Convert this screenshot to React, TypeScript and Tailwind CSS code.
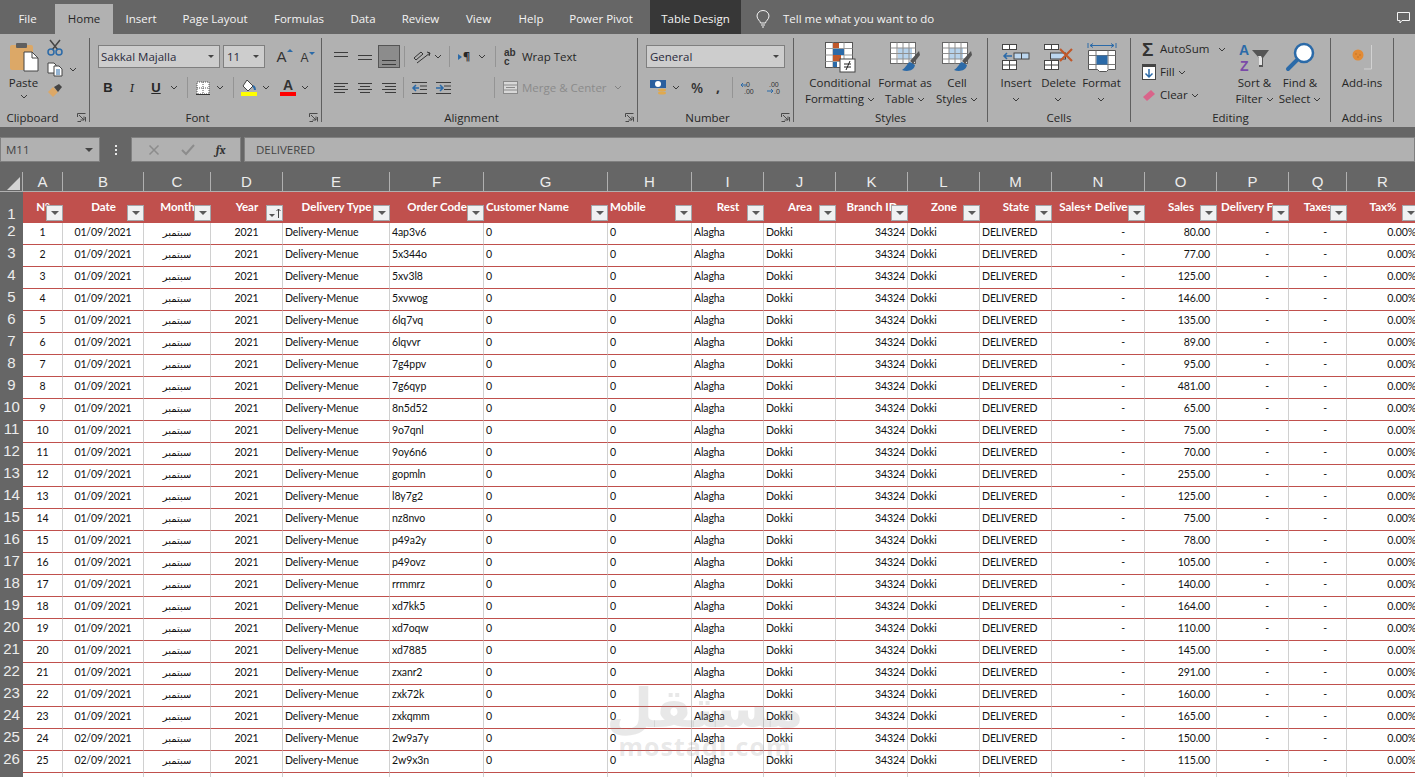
import { ReactNode } from "react"

const ui = { fontFamily: '"Open Sans", "Noto Sans", sans-serif' }
const cellFont = { fontFamily: 'Lato, "DejaVu Sans", sans-serif' }

const gridCols =
  "grid grid-cols-[23px_40px_81px_67px_72px_107px_94px_124px_84px_72px_72px_72px_72px_72px_93px_72px_72px_58px_72px]"

const tabs = [
  { name: "File", w: "w-[55px]" },
  { name: "Home", w: "w-[58px]", active: true },
  { name: "Insert", w: "w-[56px]" },
  { name: "Page Layout", w: "w-[92px]" },
  { name: "Formulas", w: "w-[76px]" },
  { name: "Data", w: "w-[52px]" },
  { name: "Review", w: "w-[63px]" },
  { name: "View", w: "w-[53px]" },
  { name: "Help", w: "w-[52px]" },
  { name: "Power Pivot", w: "w-[93px] pr-[5px]" },
]

const letters = "ABCDEFGHIJKLMNOPQR".split("")

const headers = [
  { t: "N°" },
  { t: "Date" },
  { t: "Month" },
  { t: "Year", sorted: true },
  { t: "Delivery Type" },
  { t: "Order Code" },
  { t: "Customer Name", left: true },
  { t: "Mobile", left: true },
  { t: "Rest" },
  { t: "Area" },
  { t: "Branch ID" },
  { t: "Zone" },
  { t: "State" },
  { t: "Sales+ Delivery" },
  { t: "Sales" },
  { t: "Delivery Fee" },
  { t: "Taxes" },
  { t: "Tax%" },
]

const orders: [string, string][] = [
  ["4ap3v6", "80.00"],
  ["5x344o", "77.00"],
  ["5xv3l8", "125.00"],
  ["5xvwog", "146.00"],
  ["6lq7vq", "135.00"],
  ["6lqvvr", "89.00"],
  ["7g4ppv", "95.00"],
  ["7g6qyp", "481.00"],
  ["8n5d52", "65.00"],
  ["9o7qnl", "75.00"],
  ["9oy6n6", "70.00"],
  ["gopmln", "255.00"],
  ["l8y7g2", "125.00"],
  ["nz8nvo", "75.00"],
  ["p49a2y", "78.00"],
  ["p49ovz", "105.00"],
  ["rrmmrz", "140.00"],
  ["xd7kk5", "164.00"],
  ["xd7oqw", "110.00"],
  ["xd7885", "145.00"],
  ["zxanr2", "291.00"],
  ["zxk72k", "160.00"],
  ["zxkqmm", "165.00"],
  ["2w9a7y", "150.00"],
  ["2w9x3n", "115.00"],
]

function Chev({ className = "" }: { className?: string }) {
  return (
    <svg width="8" height="5" viewBox="0 0 8 5" className={`shrink-0 ${className}`}>
      <path d="M1 1l3 3 3-3" fill="none" stroke="#3a3a3a" strokeWidth="1" />
    </svg>
  )
}

function Sep({ className = "" }: { className?: string }) {
  return <div className={`w-px h-[21px] bg-[#949494] shrink-0 ${className}`} />
}

function Lines({ rows }: { rows: [number, number, number][] }) {
  return (
    <svg width="16" height="14" viewBox="0 0 16 14" className="shrink-0">
      {rows.map(([y, a, b]) => (
        <path key={y} d={`M${a} ${y}.5H${b}`} stroke="#3c3c3c" />
      ))}
    </svg>
  )
}

function Launcher() {
  return (
    <svg width="9" height="9" viewBox="0 0 9 9" className="absolute right-[3px] bottom-0">
      <path d="M.5 4V.5H8.500M8.500.5" fill="none" stroke="#4a4a4a" />
      <path d="M2 2l5 5M7 3.500V7H3.500" fill="none" stroke="#4a4a4a" />
      <path d="M.5 8.500H4M8.500 4v4.500" fill="none" stroke="#4a4a4a" />
    </svg>
  )
}

function Group({
  label,
  w,
  launcher,
  labelPad = "",
  children,
}: {
  label: string
  w: string
  launcher?: boolean
  labelPad?: string
  children: ReactNode
}) {
  return (
    <div className={`relative ${w} h-[84px] border-r border-[#5f5f5f] flex flex-col shrink-0`}>
      <div className="flex-1 min-h-0">{children}</div>
      <div className={`h-[12px] text-center text-[11.5px] leading-[16px] text-[#262626] ${labelPad}`}>{label}</div>
      {launcher && <Launcher />}
    </div>
  )
}

function BigButton({
  w,
  icon,
  lines,
  chevBelow,
}: {
  w: string
  icon: ReactNode
  lines: string[]
  chevBelow?: boolean
}) {
  return (
    <div className={`${w} flex flex-col items-center shrink-0 pt-[3px]`}>
      <div className="h-[32px] flex items-center justify-center">{icon}</div>
      <div className="mt-[2px] text-[11.5px] leading-[16px] text-[#262626] text-center whitespace-nowrap">
        {lines.map((l, i) => (
          <div key={l} className="flex items-center justify-center gap-[3px]">
            {l}
            {i === lines.length - 1 && !chevBelow && lines.length > 1 && <Chev />}
          </div>
        ))}
        {chevBelow && (
          <div className="h-[16px] flex items-center justify-center">
            <Chev />
          </div>
        )}
      </div>
    </div>
  )
}

function PasteIcon() {
  return (
    <svg width="30" height="30" viewBox="0 0 30 30">
      <rect x="1" y="3" width="23" height="25" rx="2" fill="#dca867" />
      <rect x="7" y="1" width="11" height="5" rx="1" fill="#5f5f5f" />
      <path d="M15 10h8l6 6v13H15z" fill="#fff" stroke="#444" />
      <path d="M23 10v6h6" fill="none" stroke="#444" />
    </svg>
  )
}

function CondIcon() {
  return (
    <svg width="31" height="31" viewBox="0 0 31 31">
      <rect x=".5" y=".5" width="27" height="25" fill="#fff" stroke="#555" />
      <path d="M.5 6.500h27M.5 13h27M.5 19.500h27M8 .5v25M19 .5v25" stroke="#9a9a9a" />
      <rect x="8" y="1" width="6" height="5" fill="#c0582a" />
      <rect x="8" y="7" width="11" height="6" fill="#2b6aa8" />
      <rect x="8" y="13" width="8" height="6" fill="#c0582a" />
      <rect x="8" y="20" width="4" height="5" fill="#2b6aa8" />
      <rect x="15" y="17" width="15" height="13" fill="#fff" stroke="#444" />
      <path d="M19 22h7M19 25h7M25 19l-4 9" stroke="#222" fill="none" />
    </svg>
  )
}

function FormatTableIcon({ tint = false }: { tint?: boolean }) {
  return (
    <svg width="31" height="31" viewBox="0 0 31 31">
      <rect x=".5" y=".5" width="25" height="21" fill="#fff" stroke="#666" />
      <rect x={tint ? 7 : 8} y="6" width="14" height="11" fill="#b7d3ec" />
      <path d="M.5 6h25M.5 11.500h25M.5 17h25M7 .5v21M13 .5v21M19 .5v21" stroke="#8f8f8f" />
      <path d="M29 9l-9 10 3 3 7-9z" fill="#555" />
      <path d="M20 20c-3 1-4 6-8 8 5 2 12 1 13-5z" fill="#2b6aa8" />
    </svg>
  )
}

function InsertIcon() {
  return (
    <svg width="28" height="26" viewBox="0 0 28 26">
      <rect x=".5" y=".5" width="14" height="5" fill="#fff" stroke="#444" />
      <path d="M7.500.5v5" stroke="#444" />
      <rect x="12" y="9" width="15" height="6" fill="#bcd6ee" stroke="#444" />
      <path d="M19.500 9v6" stroke="#444" />
      <path d="M10 12H2m3-3l-3 3 3 3" fill="none" stroke="#2b6aa8" strokeWidth="1.500" />
      <rect x=".5" y="16.500" width="14" height="9" fill="#fff" stroke="#444" />
      <path d="M7.500 16.500v9M.5 21h14" stroke="#444" />
    </svg>
  )
}

function DeleteIcon() {
  return (
    <svg width="30" height="26" viewBox="0 0 30 26">
      <rect x=".5" y=".5" width="14" height="5" fill="#fff" stroke="#444" />
      <path d="M7.500.5v5" stroke="#444" />
      <rect x="6.500" y="9" width="15" height="6" fill="#bcd6ee" stroke="#444" />
      <rect x=".5" y="16.500" width="14" height="9" fill="#fff" stroke="#444" />
      <path d="M7.500 16.500v9M.5 21h14" stroke="#444" />
      <path d="M16 5l12 12M28 5L16 17" stroke="#c0582a" strokeWidth="2.200" />
    </svg>
  )
}

function FormatIcon() {
  return (
    <svg width="30" height="31" viewBox="0 0 30 31">
      <path d="M1 1v5M29 1v5M3 3.500h24" stroke="#2b6aa8" fill="none" />
      <path d="M6 1.500L3 3.500l3 2M24 1.500l3 2-3 2" stroke="#2b6aa8" fill="none" />
      <path d="M1.500 8.500h27v19l-7 0-2 2h-7l-2-2h-9z" fill="#fff" stroke="#555" />
      <path d="M1.500 13.500h27M1.500 22.500h27M9 8.500v19M21 8.500v19" stroke="#777" />
      <rect x="9.500" y="13.500" width="11" height="9" fill="#2b6aa8" />
    </svg>
  )
}

function SortIcon() {
  return (
    <svg width="31" height="31" viewBox="0 0 31 31">
      <text x="0" y="13" fontSize="14" fontWeight="700" fill="#2b6aa8" fontFamily="Liberation Sans, sans-serif">
        A
      </text>
      <text x="1" y="29" fontSize="14" fontWeight="700" fill="#7a4aa8" fontFamily="Liberation Sans, sans-serif">
        Z
      </text>
      <path d="M13 8h17l-6 8v9h-4v-9z" fill="#555" />
      <path d="M19 14h3l1 2v7h-3v-7z" fill="#e4e4e4" />
    </svg>
  )
}

function FindIcon() {
  return (
    <svg width="30" height="30" viewBox="0 0 30 30">
      <circle cx="19" cy="11" r="9" fill="#fff" stroke="#2b6aa8" strokeWidth="2.500" />
      <path d="M12 18L3 27" stroke="#2b6aa8" strokeWidth="4" strokeLinecap="round" />
    </svg>
  )
}

function AddinIcon() {
  return (
    <svg width="30" height="30" viewBox="0 0 30 30">
      <circle cx="11" cy="13" r="5.500" fill="#e28b36" />
      <circle cx="9" cy="12" r=".7" fill="#b9691f" />
      <circle cx="13" cy="13" r=".7" fill="#b9691f" />
      <circle cx="11" cy="15" r=".7" fill="#b9691f" />
      <path d="M24.500 3v24H17" fill="none" stroke="#d2d2d2" />
    </svg>
  )
}

function Ribbon() {
  return (
    <div className="h-[93px] bg-[#b1b1b1] flex items-start pt-[4px] text-[#262626]">
      <Group label="Clipboard" w="w-[90px]" launcher labelPad="pr-[24px]">
        <div className="flex">
          <div className="w-[47px] flex flex-col items-center pt-[3px]">
            <div className="h-[32px] flex items-center">
              <PasteIcon />
            </div>
            <div className="mt-[2px] text-[11.5px] leading-[16px]">Paste</div>
            <Chev className="mt-[3px]" />
          </div>
          <div className="flex flex-col items-start pt-[1px] gap-[6px]">
            <svg width="16" height="17" viewBox="0 0 16 17">
              <path d="M3 1l8 10M13 1L5 11" stroke="#444" strokeWidth="1.500" />
              <circle cx="4" cy="13" r="3" fill="none" stroke="#2b6aa8" strokeWidth="1.500" />
              <circle cx="12" cy="13" r="3" fill="none" stroke="#2b6aa8" strokeWidth="1.500" />
            </svg>
            <div className="flex items-center gap-[6px]">
              <svg width="16" height="15" viewBox="0 0 16 15">
                <path d="M1 1h6l2 2v8H1z" fill="#fff" stroke="#444" />
                <path d="M7 4h5l3 3v7H7z" fill="#fff" stroke="#444" />
                <path d="M9 8h4M9 10h4M9 12h4" stroke="#2b6aa8" />
              </svg>
              <Chev />
            </div>
            <svg width="16" height="15" viewBox="0 0 16 15">
              <path d="M1 9l5-5 5 5-5 5z" fill="#dca867" />
              <path d="M7 4l5-3 3 3-4 5z" fill="#444" />
            </svg>
          </div>
        </div>
      </Group>

      <Group label="Font" w="w-[232px]" launcher labelPad="pr-[16px]">
        <div className="pl-[8px] pt-[7px]">
          <div className="flex items-center h-[23px]">
            <div className="w-[122px] h-[23px] bg-[#cdcdcd] border border-[#7f7f7f] flex items-center justify-between pl-[2px] pr-[5px] text-[11.5px] text-[#2a2a3c]">
              Sakkal Majalla
              <span className="w-0 h-0 border-x-[3px] border-x-transparent border-t-[3px] border-t-[#444]" />
            </div>
            <div className="ml-[3px] w-[42px] h-[23px] bg-[#cdcdcd] border border-[#7f7f7f] flex items-center justify-between pl-[3px] pr-[5px] text-[11.5px] text-[#2a2a3c]">
              11
              <span className="w-0 h-0 border-x-[3px] border-x-transparent border-t-[3px] border-t-[#444]" />
            </div>
            <div className="ml-[8px] w-[23px] flex items-start justify-center text-[15px] leading-none text-[#333]" style={{ fontFamily: "Liberation Sans" }}>
              A
              <span className="w-0 h-0 border-x-[3px] border-x-transparent border-b-[3px] border-b-[#2b6aa8]" />
            </div>
            <div className="w-[23px] flex items-start justify-center text-[12px] leading-none text-[#333] pt-[3px]" style={{ fontFamily: "Liberation Sans" }}>
              A
              <span className="w-0 h-0 border-x-[3px] border-x-transparent border-t-[3px] border-t-[#2b6aa8]" />
            </div>
          </div>
          <div className="flex items-center h-[21px] mt-[9px]" style={{ fontFamily: "Liberation Sans" }}>
            <span className="ml-[4px] w-[12px] shrink-0 text-center text-[13px] font-bold">B</span>
            <span className="ml-[12px] w-[12px] shrink-0 text-center text-[13px] italic font-serif">I</span>
            <span className="ml-[12px] w-[12px] shrink-0 text-center text-[13px] font-bold underline">U</span>
            <Chev className="ml-[8px]" />
            <Sep className="ml-[9px]" />
            <svg width="14" height="14" viewBox="0 0 14 14" className="ml-[8px]">
              <path d="M1 1h12v12H1zM7 1v12M1 7h12" fill="#fff" stroke="#555" strokeDasharray="1 1" />
              <path d="M0 13.500h14" stroke="#333" />
            </svg>
            <Chev className="ml-[6px]" />
            <Sep className="ml-[9px]" />
            <div className="ml-[7px] flex flex-col items-center w-[16px]">
              <svg width="14" height="12" viewBox="0 0 14 12">
                <path d="M5 0l6 6-5 5-5-5z" fill="#fff" stroke="#444" />
                <path d="M11 6c2 1 2 3 2 4" stroke="#2b6aa8" strokeWidth="2" fill="none" />
              </svg>
              <div className="w-[16px] h-[4px] bg-[#ffff00]" />
            </div>
            <Chev className="ml-[5px]" />
            <div className="ml-[10px] flex flex-col items-center w-[16px]">
              <span className="text-[14px] leading-[13px] font-bold text-[#333]">A</span>
              <div className="w-[16px] h-[4px] bg-[#ff0000]" />
            </div>
            <Chev className="ml-[5px]" />
          </div>
        </div>
      </Group>

      <Group label="Alignment" w="w-[316px]" launcher labelPad="pr-[16px]">
        <div className="pl-[11px] pt-[7px]">
          <div className="flex items-center h-[23px]">
            <Lines rows={[[2, 1, 15], [6, 1, 15]]} />
            <div className="ml-[8px]">
              <Lines rows={[[5, 1, 15], [9, 1, 15]]} />
            </div>
            <div className="ml-[5px] w-[22px] h-[23px] bg-[#8c8c8c] border border-[#555] flex items-end justify-center pb-[2px]">
              <Lines rows={[[9, 1, 15], [13, 1, 15]]} />
            </div>
            <Sep className="ml-[4px]" />
            <svg width="18" height="16" viewBox="0 0 18 16" className="ml-[8px]">
              <path d="M1 9l7-6 2 2-7 6z" fill="none" stroke="#333" />
              <path d="M4 14L17 4" stroke="#333" />
              <path d="M14 3l3 1-1 3" stroke="#333" fill="none" />
            </svg>
            <Chev className="ml-[3px]" />
            <Sep className="ml-[7px]" />
            <div className="ml-[8px] flex items-center text-[11px] font-bold w-[16px] shrink-0">
              <span className="w-0 h-0 border-y-[3px] border-y-transparent border-l-[4px] border-l-[#2b6aa8]" />
              <span className="ml-[1px]">¶</span>
            </div>
            <Chev className="ml-[4px]" />
            <Sep className="ml-[9px]" />
            <span className="ml-[8px] w-[14px] shrink-0 text-[10px] leading-[9px] font-bold text-[#333]" style={{ fontFamily: "Liberation Sans" }}>
              ab
              <br />c
            </span>
            <span className="ml-[4px] text-[11.5px] whitespace-nowrap">Wrap Text</span>
          </div>
          <div className="flex items-center h-[21px] mt-[9px]">
            <Lines rows={[[2, 1, 15], [5, 1, 12], [8, 1, 15], [11, 1, 12]]} />
            <div className="ml-[8px]">
              <Lines rows={[[2, 1, 15], [5, 3, 13], [8, 1, 15], [11, 3, 13]]} />
            </div>
            <div className="ml-[8px]">
              <Lines rows={[[2, 1, 15], [5, 4, 15], [8, 1, 15], [11, 4, 15]]} />
            </div>
            <Sep className="ml-[6px]" />
            <svg width="17" height="14" viewBox="0 0 17 14" className="ml-[7px]">
              <path d="M1 1.500h15M9 5h7M9 8.500h7M1 12.500h15" stroke="#3c3c3c" />
              <path d="M8 7H2m3-3L2 7l3 3" stroke="#2b6aa8" strokeWidth="1.500" fill="none" />
            </svg>
            <svg width="17" height="14" viewBox="0 0 17 14" className="ml-[7px]">
              <path d="M1 1.500h15M9 5h7M9 8.500h7M1 12.500h15" stroke="#3c3c3c" />
              <path d="M1 7h6M5 4l3 3-3 3" stroke="#2b6aa8" strokeWidth="1.500" fill="none" />
            </svg>
            <Sep className="ml-[42px]" />
            <svg width="15" height="13" viewBox="0 0 15 13" className="ml-[8px]">
              <rect x=".5" y=".5" width="14" height="12" fill="#d8d8d8" stroke="#8a8a8a" />
              <path d="M.5 4h14M.5 9h14M3 6.500h9" stroke="#8a8a8a" />
            </svg>
            <span className="ml-[4px] w-[92px] text-[11.5px] whitespace-nowrap text-[#8b8b8b]">Merge &amp; Center</span>
            <Chev className="opacity-40" />
          </div>
        </div>
      </Group>

      <Group label="Number" w="w-[156px]" launcher labelPad="pr-[16px]">
        <div className="pl-[8px] pt-[7px]">
          <div className="w-[139px] h-[23px] bg-[#cdcdcd] border border-[#7f7f7f] flex items-center justify-between pl-[3px] pr-[5px] text-[11.5px] text-[#2a2a3c]">
            General
            <span className="w-0 h-0 border-x-[3px] border-x-transparent border-t-[3px] border-t-[#444]" />
          </div>
          <div className="flex items-center h-[21px] mt-[9px]">
            <svg width="18" height="16" viewBox="0 0 18 16" className="ml-[4px]">
              <rect x="0" y="0" width="16" height="8" fill="#2b5f9e" />
              <circle cx="8" cy="4" r="3" fill="#fff" />
              <ellipse cx="12" cy="10" rx="4" ry="1.500" fill="#e0a94e" />
              <ellipse cx="12" cy="13" rx="4" ry="1.500" fill="#e0a94e" />
            </svg>
            <Chev className="ml-[4px]" />
            <span className="ml-[11px] text-[14px] font-semibold text-[#333]">%</span>
            <span className="ml-[13px] text-[14px] font-bold text-[#333] -mt-[2px]">,</span>
            <Sep className="ml-[12px]" />
            <svg width="16" height="14" viewBox="0 0 16 14" className="ml-[7px]">
              <text x="4" y="6" fontSize="7" fill="#333" fontFamily="Liberation Sans">.0</text>
              <text x="4" y="13" fontSize="7" fill="#333" fontFamily="Liberation Sans">.00</text>
              <path d="M7 4H1m2-2L1 4l2 2" stroke="#2b6aa8" fill="none" />
            </svg>
            <svg width="16" height="14" viewBox="0 0 16 14" className="ml-[10px]">
              <text x="3" y="6" fontSize="7" fill="#333" fontFamily="Liberation Sans">.00</text>
              <text x="8" y="13" fontSize="7" fill="#333" fontFamily="Liberation Sans">.0</text>
              <path d="M1 10h6M5 8l2 2-2 2" stroke="#2b6aa8" fill="none" />
            </svg>
          </div>
        </div>
      </Group>

      <Group label="Styles" w="w-[194px]">
        <div className="flex pl-[4px]">
          <BigButton w="w-[84px]" icon={<CondIcon />} lines={["Conditional", "Formatting"]} />
          <BigButton w="w-[46px]" icon={<FormatTableIcon />} lines={["Format as", "Table"]} />
          <BigButton w="w-[58px]" icon={<FormatTableIcon tint />} lines={["Cell", "Styles"]} />
        </div>
      </Group>

      <Group label="Cells" w="w-[143px]">
        <div className="flex pl-[7px]">
          <BigButton w="w-[42px]" icon={<InsertIcon />} lines={["Insert"]} chevBelow />
          <BigButton w="w-[43px]" icon={<DeleteIcon />} lines={["Delete"]} chevBelow />
          <BigButton w="w-[43px]" icon={<FormatIcon />} lines={["Format"]} chevBelow />
        </div>
      </Group>

      <Group label="Editing" w="w-[200px]">
        <div className="flex pl-[11px]">
          <div className="w-[90px] flex flex-col text-[11.5px] leading-[16px] pt-[3px] gap-[7px]">
            <div className="flex items-center h-[16px] whitespace-nowrap">
              <span className="w-[18px] text-[19px] leading-none font-bold text-[#333]" style={{ fontFamily: "Liberation Sans" }}>
                Σ
              </span>
              AutoSum
              <Chev className="ml-[9px]" />
            </div>
            <div className="flex items-center h-[16px]">
              <svg width="14" height="16" viewBox="0 0 14 16" className="mr-[4px]">
                <rect x=".5" y=".5" width="13" height="15" fill="#fff" stroke="#444" />
                <rect x="0" y="0" width="14" height="3" fill="#444" />
                <path d="M7 5v8M3.500 9.500L7 13l3.500-3.500" stroke="#2b6aa8" strokeWidth="1.500" fill="none" />
              </svg>
              Fill
              <Chev className="ml-[3px]" />
            </div>
            <div className="flex items-center h-[16px]">
              <svg width="14" height="13" viewBox="0 0 14 13" className="mr-[4px]">
                <path d="M1 8l8-7 4 4-8 7z" fill="#d9648a" />
              </svg>
              Clear
              <Chev className="ml-[3px]" />
            </div>
          </div>
          <BigButton w="w-[45px]" icon={<SortIcon />} lines={["Sort &", "Filter"]} />
          <BigButton w="w-[46px]" icon={<FindIcon />} lines={["Find &", "Select"]} />
        </div>
      </Group>

      <Group label="Add-ins" w="w-[63px]">
        <BigButton w="w-[62px]" icon={<AddinIcon />} lines={["Add-ins"]} />
      </Group>
    </div>
  )
}

function FilterButton({ sorted }: { sorted?: boolean }) {
  return (
    <div className="absolute right-0 bottom-[2px] w-[17px] h-[16px] bg-[#f0f1f2] border border-[#a4a7ab] flex items-center justify-center">
      <span
        className={
          sorted
            ? "w-0 h-0 border-x-[3px] border-x-transparent border-t-[3px] border-t-[#555] mr-[1px] mt-[4px]"
            : "w-0 h-0 border-x-[4px] border-x-transparent border-t-[4px] border-t-[#5a5a5a]"
        }
      />
      {sorted && (
        <svg width="5" height="10" viewBox="0 0 5 10">
          <path d="M2.500 10V1M.5 3l2-2 2 2" fill="none" stroke="#444" />
        </svg>
      )}
    </div>
  )
}

function Cell({ className = "", children }: { className?: string; children?: ReactNode }) {
  return (
    <div className={`h-[22px] leading-[18px] border-r border-b border-r-[#d0d0d0] border-b-[#c0504d] overflow-hidden whitespace-nowrap ${className}`}>
      {children}
    </div>
  )
}

function Sheet() {
  return (
    <div className="relative text-[10.5px] tracking-[-0.1px]" style={cellFont}>
      <div className={`${gridCols} h-[20px] bg-[#666666] border-b border-[#b0b0b0]`}>
        <div className="relative border-r border-[#b0b0b0]">
          <span className="absolute left-[7px] bottom-[2px] w-0 h-0 border-l-[13px] border-l-transparent border-b-[13px] border-b-[#d4d4d4]" />
        </div>
        {letters.map((l) => (
          <div
            key={l}
            className="text-center text-[15px] tracking-normal leading-[20px] text-[#ececec] border-r border-[#b0b0b0]"
            style={{ fontFamily: '"Liberation Sans", sans-serif' }}
          >
            {l}
          </div>
        ))}
      </div>

      <div className={`${gridCols} h-[31px]`}>
        <div
          className="h-[31px] bg-[#666666] flex items-end justify-center text-[15px] tracking-normal leading-[19px] text-[#ececec]"
          style={{ fontFamily: '"Liberation Sans", sans-serif' }}
        >
          1
        </div>
        {headers.map((h) => (
          <div
            key={h.t}
            className={`relative h-[31px] bg-[#c0504d] text-white text-[11.5px] tracking-normal font-bold leading-[29px] overflow-hidden whitespace-nowrap ${
              h.left ? "pl-[2px]" : "flex justify-center"
            }`}
          >
            {h.t}
            <FilterButton sorted={h.sorted} />
          </div>
        ))}
      </div>

      {orders.map(([code, sales], i) => (
        <div key={code} className={`${gridCols} bg-white text-[#111]`}>
          <div
            className="h-[22px] bg-[#666666] text-center text-[15px] tracking-normal leading-[15px] text-[#ececec]"
            style={{ fontFamily: '"Liberation Sans", sans-serif' }}
          >
            {i + 2}
          </div>
          <Cell className="text-center">{i + 1}</Cell>
          <Cell className="text-center">{i < 23 ? "01/09/2021" : "02/09/2021"}</Cell>
          <Cell className="text-center text-[10px]">
            <span dir="rtl" style={{ fontFamily: '"DejaVu Sans", sans-serif' }}>
              سبتمبر
            </span>
          </Cell>
          <Cell className="text-center">2021</Cell>
          <Cell className="pl-[2px]">Delivery-Menue</Cell>
          <Cell className="pl-[2px]">{code}</Cell>
          <Cell className="pl-[2px]">0</Cell>
          <Cell className="pl-[2px]">0</Cell>
          <Cell className="pl-[2px]">Alagha</Cell>
          <Cell className="pl-[2px]">Dokki</Cell>
          <Cell className="text-right pr-[2px]">34324</Cell>
          <Cell className="pl-[2px]">Dokki</Cell>
          <Cell className="pl-[2px]">DELIVERED</Cell>
          <Cell className="text-right pr-[19px]">-</Cell>
          <Cell className="text-right pr-[6px]">{sales}</Cell>
          <Cell className="text-right pr-[19px]">-</Cell>
          <Cell className="text-right pr-[19px]">-</Cell>
          <Cell className="text-right pr-[2px]">0.00%</Cell>
        </div>
      ))}

      <div className={`${gridCols} bg-white h-[6px]`}>
        <div className="bg-[#666666]" />
        {letters.map((l) => (
          <div key={l} className="border-r border-[#d0d0d0]" />
        ))}
      </div>

      {/* mostaql watermark */}
      <div className="absolute left-[615px] top-[512px] w-[180px] flex flex-col items-center pointer-events-none text-[#8a8a8a]/20 font-bold">
        <div className="text-[54px] leading-[50px]" dir="rtl" style={{ fontFamily: '"DejaVu Sans", sans-serif' }}>
          مستقل
        </div>
        <div className="text-[25px] leading-[24px] tracking-[1px]" style={{ fontFamily: '"Open Sans", sans-serif' }}>
          mostaql.com
        </div>
      </div>
    </div>
  )
}

export default function App() {
  return (
    <div className="w-[1415px] h-[777px] overflow-hidden bg-[#666666]" style={ui}>
      {/* tabs */}
      <div className="h-[34px] flex items-end text-[11.5px] text-[#f4f4f4]">
        {tabs.map((t) => (
          <div
            key={t.name}
            className={`${t.w} h-[30px] flex items-center justify-center shrink-0 ${
              t.active ? "bg-[#b1b1b1] text-[#262626]" : ""
            }`}
          >
            {t.name}
          </div>
        ))}
        <div className="w-[91px] h-[34px] bg-[#373737] flex items-center justify-center pt-[4px] shrink-0">
          Table Design
        </div>
        <div className="ml-[15px] h-[30px] flex items-center gap-[13px]">
          <svg width="14" height="18" viewBox="0 0 14 18">
            <path
              d="M4.500 13c0-2-3.500-3.500-3.500-7a6 5.500 0 0 1 12 0c0 3.500-3.500 5-3.500 7zM5 15h4M6 17h2"
              fill="none"
              stroke="#f4f4f4"
            />
          </svg>
          <span>Tell me what you want to do</span>
        </div>
        <svg width="13" height="12" viewBox="0 0 13 12" className="ml-auto mr-[5px] mb-[10px]">
          <path d="M.5.5h12v8H5l-2 2.500V8.500H.5z" fill="none" stroke="#f4f4f4" />
        </svg>
      </div>

      <Ribbon />

      {/* formula bar */}
      <div className="h-[45px] pt-[10px] flex items-start">
        <div className="w-[100px] h-[25px] bg-[#b1b1b1] border border-[#808080] flex items-center justify-between pl-[5px] pr-[6px] text-[11.5px] text-[#444]">
          M11
          <span className="w-0 h-0 border-x-[4px] border-x-transparent border-t-[4px] border-t-[#444]" />
        </div>
        <div className="w-[31px] h-[25px] flex flex-col items-center justify-center gap-[2px]">
          <span className="w-[2px] h-[2px] bg-[#e8e8e8]" />
          <span className="w-[2px] h-[2px] bg-[#e8e8e8]" />
          <span className="w-[2px] h-[2px] bg-[#e8e8e8]" />
        </div>
        <div className="w-[110px] h-[25px] bg-[#b1b1b1] border border-[#808080] flex items-center justify-around pl-[6px] pr-[4px]">
          <svg width="12" height="12" viewBox="0 0 12 12">
            <path d="M1.500 1.500l9 9M10.500 1.500l-9 9" stroke="#8c8c8c" strokeWidth="1.500" />
          </svg>
          <svg width="14" height="12" viewBox="0 0 14 12">
            <path d="M1 6l4 4 8-9" stroke="#8c8c8c" strokeWidth="2" fill="none" />
          </svg>
          <span className="text-[12px] italic font-bold font-serif text-[#333]">fx</span>
        </div>
        <div className="ml-[3px] flex-1 h-[25px] bg-[#b1b1b1] border border-[#808080] flex items-center pl-[11px] text-[11.5px] text-[#444]">
          DELIVERED
        </div>
      </div>

      <Sheet />
    </div>
  )
}
